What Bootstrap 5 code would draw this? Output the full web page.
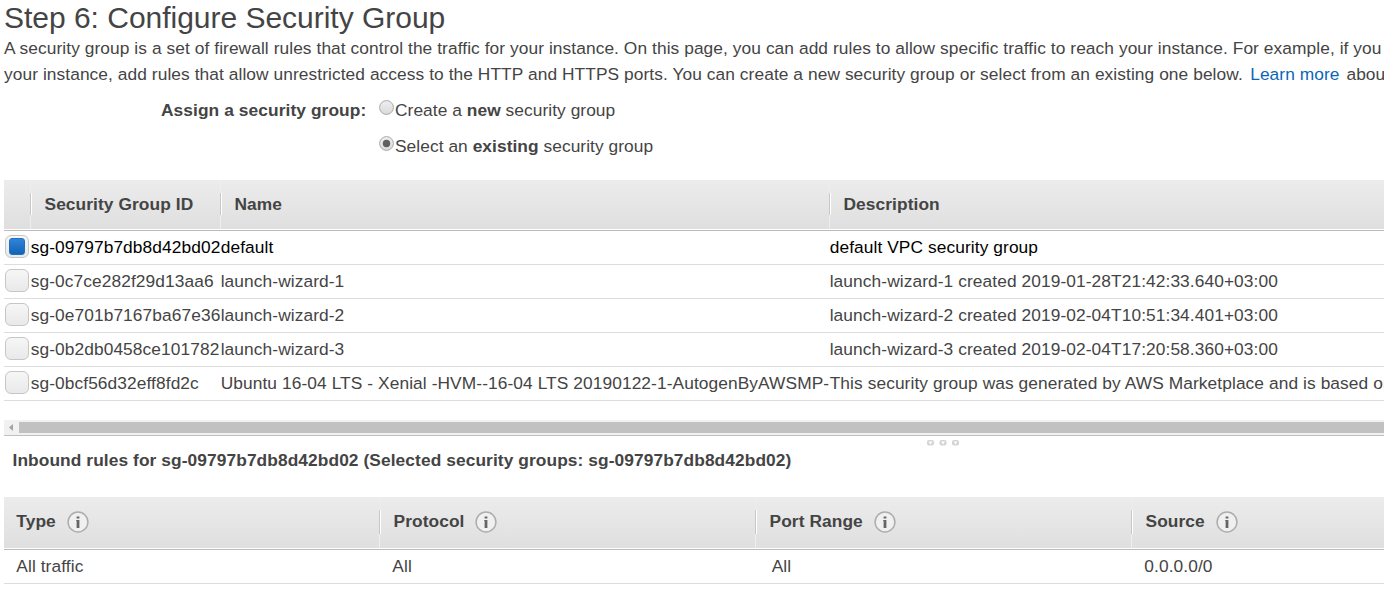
<!DOCTYPE html>
<html lang="en">
<head>
<meta charset="utf-8">
<meta name="viewport" content="width=device-width, initial-scale=1">
<title>Step 6: Configure Security Group</title>
<link href="https://cdn.jsdelivr.net/npm/bootstrap@5.3.0/dist/css/bootstrap.min.css" rel="stylesheet">
<style>
  body { font: 17.33px/26px "Liberation Sans", Arial, sans-serif; letter-spacing: .087px; color: #444; background: #fff; height: 595px; }
  .wizard { padding-left: 4px; width: 1384px; height: 595px; }
  h1 { font-size: 30px; line-height: 35px; color: #444; letter-spacing: -.02px; }
  .intro { width: 1520px; letter-spacing: .076px; }
  .intro a { color: #0b66b8; margin: 0 2px 0 2.5px; }
  .choices { padding-left: 157px; margin-top: 10px; margin-bottom: 21px; }
  .choices .caption { width: 218px; }
  .choice { height: 26px; letter-spacing: .06px; }
  .choices .stack { display: grid; gap: 10px; }
  .dot { width: 15px; height: 15px; flex: none; margin-top: 3px; margin-right: 1px; }
  .grid-head { height: 50px; background: linear-gradient(#ececec, #dfdfdf); border-bottom: 1px solid #fff; }
  .head-cell { height: 100%; padding-left: 14.5px; padding-bottom: 1px; }
  .head-cell.split { background: linear-gradient(#c8c8c8, #c8c8c8) 0 13px / 1px 22px no-repeat, linear-gradient(#fff, #fff) 1px 13px / 1px 22px no-repeat, linear-gradient(#eee, #eee) 0 0 / 1px 100% no-repeat; }
  .grid-head .c-box { width: 26px; }
  .grid-row { height: 34px; border-bottom: 1px solid #ddd; padding-bottom: 1px; }
  .first-line { border-top: 1px solid #bbb; }
  .c-box { width: 26.7px; flex: none; }
  .c-id { width: 190px; flex: none; }
  .grid-row .c-id { letter-spacing: .09px; }
  .c-name { width: 609px; flex: none; }
  .c-desc { width: 620px; flex: none; }
  .tick { width: 24px; height: 23px; margin-left: 1px; border: 1px solid #c6c6c6; border-radius: 6px; background: linear-gradient(#f6f6f6, #e9e9e9); padding: 2px 3px; position: relative; top: -1px; }
  .tick.on::before { content: ""; display: block; width: 16px; height: 17px; border-radius: 3px; background: linear-gradient(#3083d8, #1263b5); border: 1px solid #1f6fc4; }
  .hbar { height: 15px; margin-top: 19px; background: #f1f1f1; }
  .hbar .arrow { width: 15px; }
  .hbar .thumb { height: 11px; background: #c1c1c1; }
  .pane-edge { border-top: 1px solid #bfbfbf; }
  .grip { height: 11px; padding-left: 923px; padding-top: 4px; }
  .rules-title { padding-left: 8.5px; height: 50px; }
  .rules-head { height: 52px; }
  .rules-head .head-cell { padding-bottom: 3px; }
  .rules-head .head-cell.split { background-size: 1px 24px, 1px 24px, 1px 100%; }
  .rules-head .head-cell:first-child { width: 375px; padding-left: 12.3px; }
  .c-rule { width: 376px; flex: none; }
  .rules-row .c-rule { padding-left: 12.3px; }
  .rules-row .c-rule:nth-child(3) { padding-left: 15.7px; }
  .info { width: 22px; height: 22px; margin-left: 11px; position: relative; top: 1px; }
</style>
</head>
<body class="overflow-hidden">
<main class="wizard overflow-hidden text-nowrap">
  <h1 class="m-0 fw-normal">Step 6: Configure Security Group</h1>
  <p class="intro m-0">A security group is a set of firewall rules that control the traffic for your instance. On this page, you can add rules to allow specific traffic to reach your instance. For example, if you<br>your instance, add rules that allow unrestricted access to the HTTP and HTTPS ports. You can create a new security group or select from an existing one below. <a href="#" class="text-decoration-none">Learn more</a> about</p>

  <section class="choices d-flex">
    <div class="caption fw-bold">Assign a security group:</div>
    <div class="stack">
      <label class="choice d-flex"><svg class="dot" viewBox="0 0 15 15"><use href="#radio-off"/></svg><span>Create a <b>new</b> security group</span></label>
      <label class="choice d-flex"><svg class="dot" viewBox="0 0 15 15"><use href="#radio-off"/><circle cx="7.5" cy="7.5" r="3.7" fill="#5f5f5f"/></svg><span>Select an <b>existing</b> security group</span></label>
    </div>
  </section>

  <section class="groups">
    <div class="grid-head d-flex align-items-center fw-bold">
      <div class="c-box"></div>
      <div class="head-cell split c-id d-flex align-items-center">Security Group ID</div>
      <div class="head-cell split c-name d-flex align-items-center">Name</div>
      <div class="head-cell split c-desc d-flex align-items-center">Description</div>
    </div>
    <div class="first-line"></div>
    <div class="grid-row d-flex align-items-center text-black"><div class="c-box"><div class="tick on"></div></div><div class="c-id">sg-09797b7db8d42bd02</div><div class="c-name">default</div><div class="c-desc">default VPC security group</div></div>
    <div class="grid-row d-flex align-items-center"><div class="c-box"><div class="tick"></div></div><div class="c-id">sg-0c7ce282f29d13aa6</div><div class="c-name">launch-wizard-1</div><div class="c-desc">launch-wizard-1 created 2019-01-28T21:42:33.640+03:00</div></div>
    <div class="grid-row d-flex align-items-center"><div class="c-box"><div class="tick"></div></div><div class="c-id">sg-0e701b7167ba67e36</div><div class="c-name">launch-wizard-2</div><div class="c-desc">launch-wizard-2 created 2019-02-04T10:51:34.401+03:00</div></div>
    <div class="grid-row d-flex align-items-center"><div class="c-box"><div class="tick"></div></div><div class="c-id">sg-0b2db0458ce101782</div><div class="c-name">launch-wizard-3</div><div class="c-desc">launch-wizard-3 created 2019-02-04T17:20:58.360+03:00</div></div>
    <div class="grid-row d-flex align-items-center"><div class="c-box"><div class="tick"></div></div><div class="c-id">sg-0bcf56d32eff8fd2c</div><div class="c-name">Ubuntu 16-04 LTS - Xenial -HVM--16-04 LTS 20190122-1-AutogenByAWSMP-</div><div class="c-desc">This security group was generated by AWS Marketplace and is based on</div></div>
    <div class="hbar d-flex align-items-center">
      <svg class="arrow" height="15" viewBox="0 0 15 15"><path d="M9 4v7L5 7.5z" fill="#a3a3a3"/></svg>
      <div class="thumb flex-grow-1"></div>
    </div>
  </section>

  <section class="pane-edge">
    <div class="grip"><svg class="d-block" width="33" height="6" viewBox="0 0 33 6"><g fill="#d4d4d4"><rect width="7" height="5.500" rx="2"/><rect x="12.5" width="7" height="5.500" rx="2"/><rect x="25" width="7" height="5.500" rx="2"/></g><g fill="#fff"><path d="M1.500 1.500h4l-2 3zM14 1.500h4l-2 3zM26.500 1.500h4l-2 3z"/></g></svg></div>
    <div class="rules-title fw-bold">Inbound rules for sg-09797b7db8d42bd02 (Selected security groups: sg-09797b7db8d42bd02)</div>
    <div class="grid-head rules-head d-flex fw-bold">
      <div class="head-cell c-rule d-flex align-items-center">Type<svg class="info" viewBox="0 0 22 22"><use href="#info"/></svg></div>
      <div class="head-cell split c-rule d-flex align-items-center">Protocol<svg class="info" viewBox="0 0 22 22"><use href="#info"/></svg></div>
      <div class="head-cell split c-rule d-flex align-items-center">Port Range<svg class="info" viewBox="0 0 22 22"><use href="#info"/></svg></div>
      <div class="head-cell split c-rule d-flex align-items-center">Source<svg class="info" viewBox="0 0 22 22"><use href="#info"/></svg></div>
    </div>
    <div class="first-line"></div>
    <div class="grid-row rules-row d-flex align-items-center"><div class="c-rule">All traffic</div><div class="c-rule">All</div><div class="c-rule">All</div><div class="c-rule">0.0.0.0/0</div></div>
  </section>
</main>
<svg width="0" height="0" class="position-absolute">
  <defs>
    <linearGradient id="knob" x2="0" y2="1"><stop stop-color="#efefef"/><stop offset="1" stop-color="#dadada"/></linearGradient>
    <g id="radio-off"><circle cx="7.500" cy="7.500" r="6.900" fill="url(#knob)" stroke="#a9a9a9"/></g>
    <g id="info"><circle cx="11" cy="11" r="9.900" fill="#f0f0f0" stroke="#adadad" stroke-width="1.500"/><rect x="9.600" y="5.500" width="2.800" height="2" fill="#666"/><path d="M9.200 9h3.200v8H9.600v-7h-.4z" fill="#666"/></g>
  </defs>
</svg>
<script src="https://cdn.jsdelivr.net/npm/bootstrap@5.3.0/dist/js/bootstrap.bundle.min.js"></script>
</body>
</html>
